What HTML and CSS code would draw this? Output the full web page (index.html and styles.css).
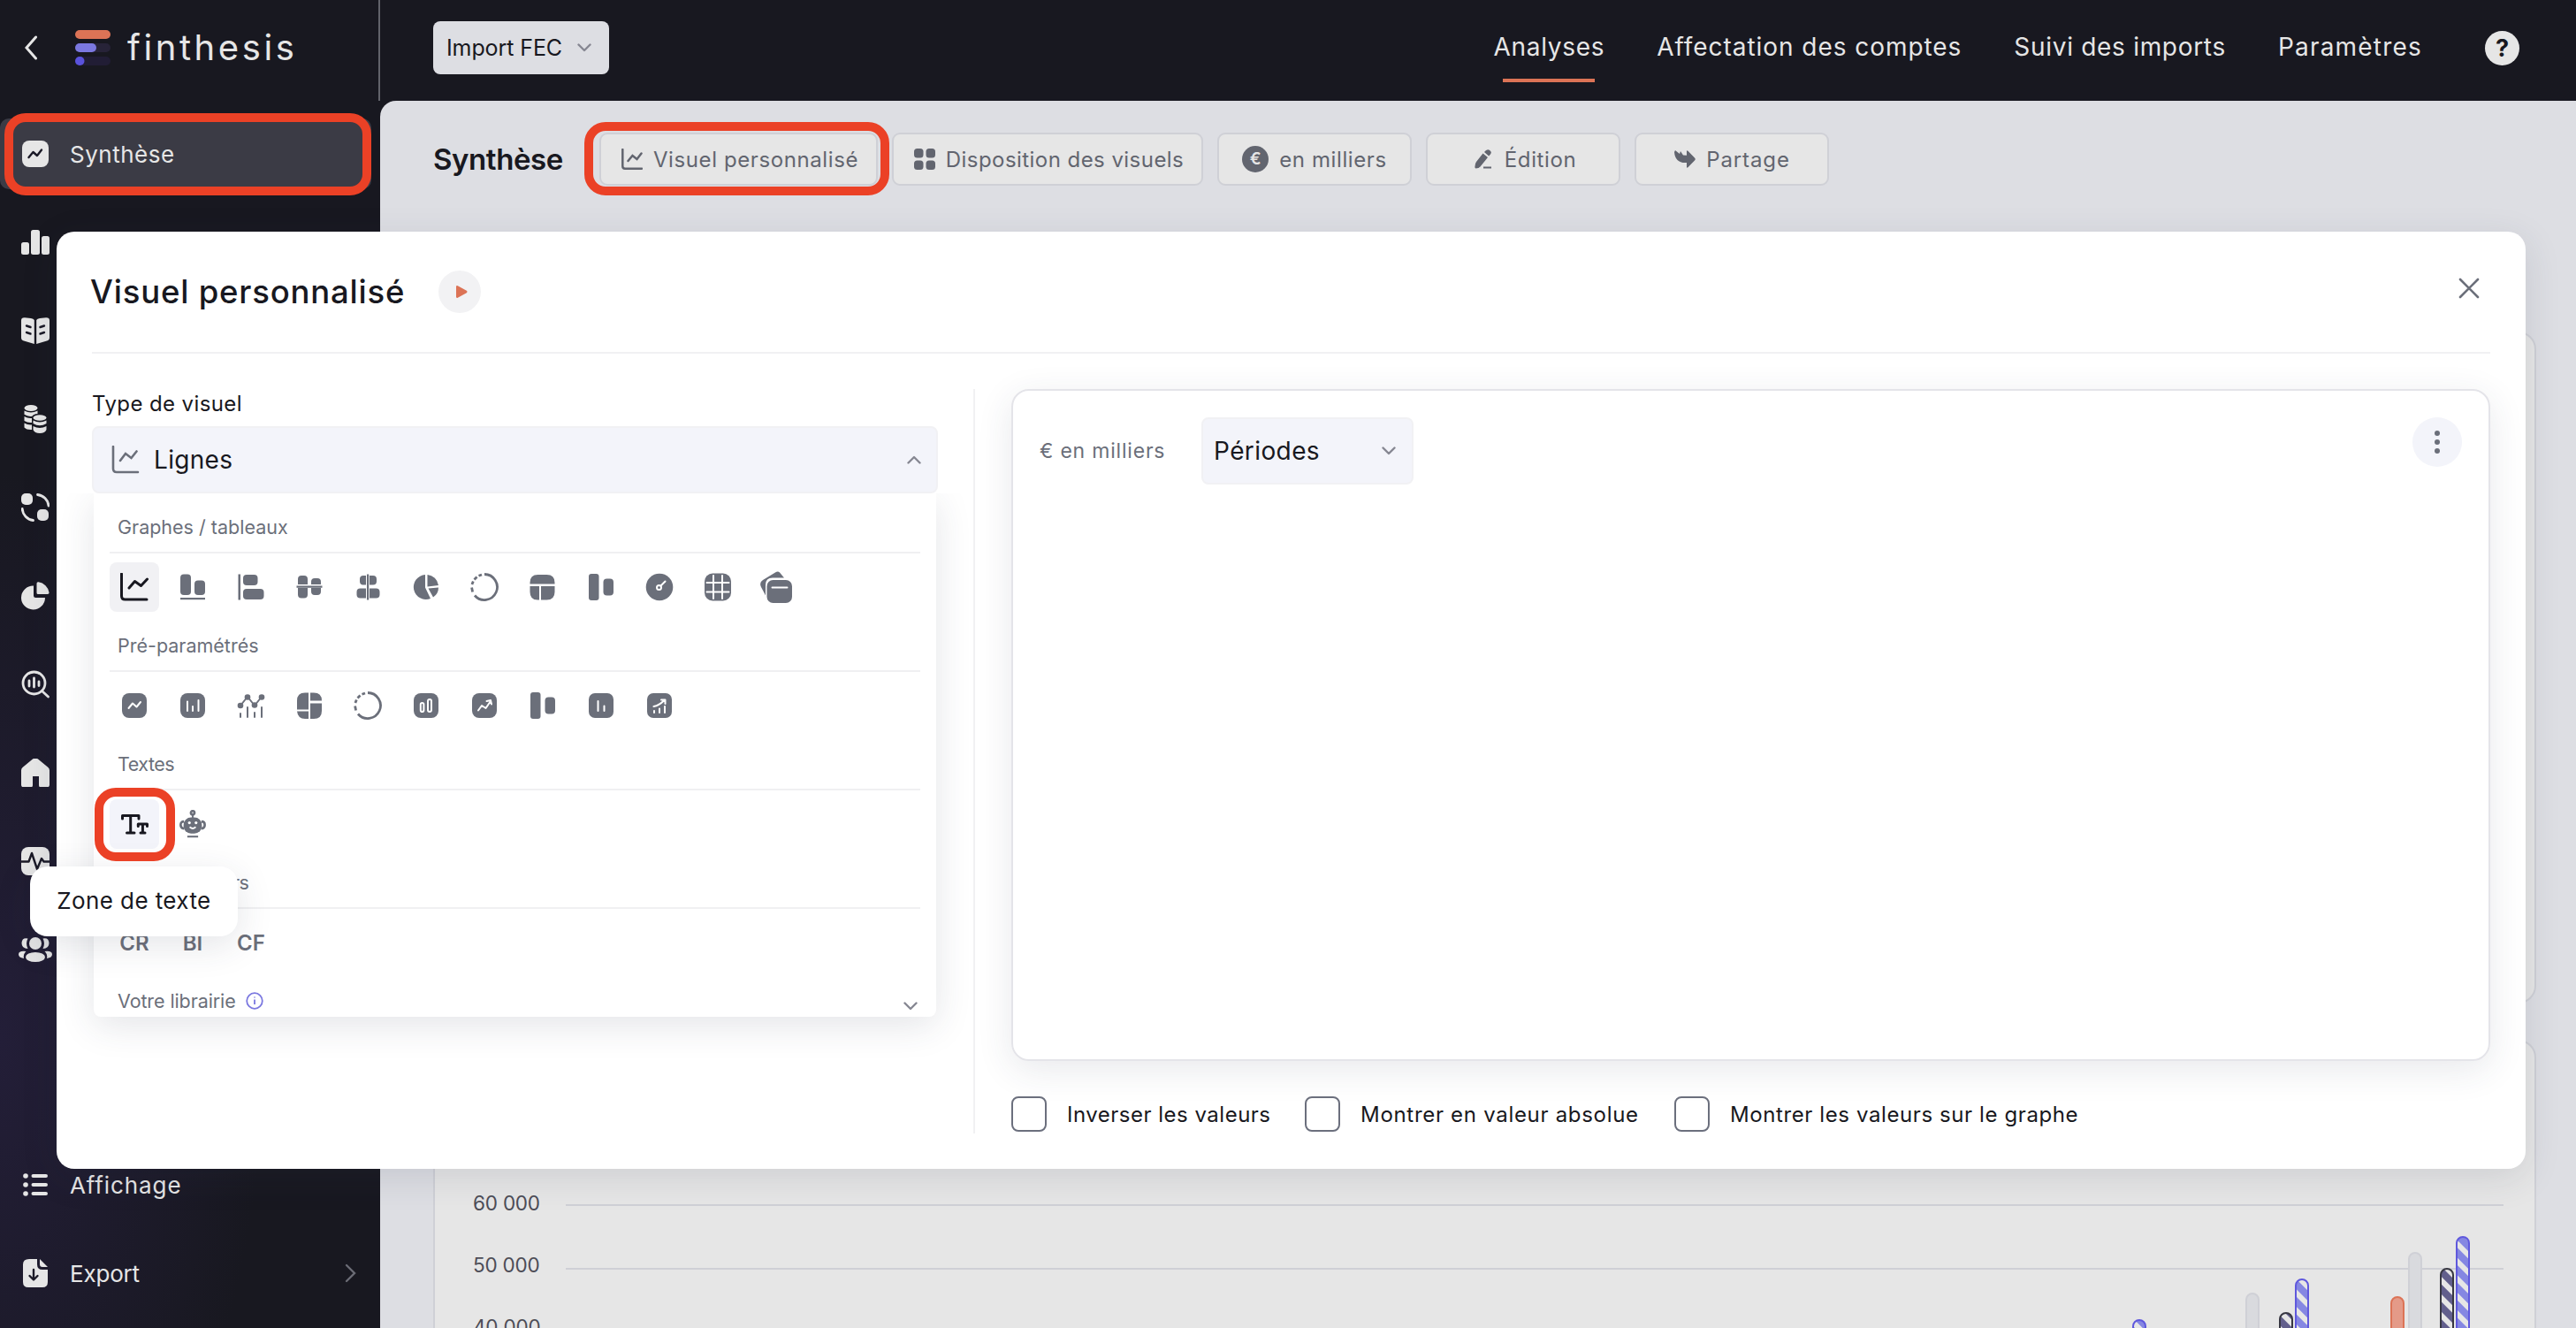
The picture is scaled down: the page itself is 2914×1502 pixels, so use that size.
FILE: index.html
```html
<!DOCTYPE html>
<html lang="fr">
<head>
    <meta charset="utf-8">
    <title>finthesis</title>
    <link rel="stylesheet" href="styles.css">
</head>
<body>
    <header class="topbar">
        <div class="brand">
            <svg class="back" viewBox="0 0 16 28"><path d="M13.500 2L3 14l10.500 12"/></svg>
            <svg class="logo" viewBox="0 0 40 40">
                <rect width="40" height="10" rx="5" fill="#dc7356"/>
                <rect y="15" width="40" height="10" rx="5" fill="#272338"/>
                <rect y="15" width="24" height="10" rx="5" fill="#7b78e0"/>
                <rect y="30" width="40" height="10" rx="5" fill="#211d35"/>
                <rect y="30" width="10.500" height="10" rx="5" fill="#5a52dc"/>
            </svg>
            <span class="brand-name">finthesis</span>
        </div>
        <div class="import-select">
            <span>Import FEC</span>
            <svg class="chev" viewBox="0 0 16 10"><path d="M1.500 1.500L8 8l6.500-6.500"/></svg>
        </div>
        <nav class="nav">
            <a class="nav-link active">Analyses</a>
            <a class="nav-link nav-affect">Affectation des comptes</a>
            <a class="nav-link">Suivi des imports</a>
            <a class="nav-link nav-param">Paramètres</a>
        </nav>
        <div class="help">?</div>
    </header>

    <div class="page">
        <aside class="sidebar">
            <div class="side-item selected">
                <svg class="side-icon" viewBox="0 0 32 32"><rect x="1" y="1" width="30" height="30" rx="8"/><path class="cut" d="M8.500 20l5-6 4.500 4 5-6.500"/></svg>
                <span>Synthèse</span>
            </div>
            <div class="side-item">
                <svg class="side-icon" viewBox="0 0 32 32"><rect x="0" y="16" width="9" height="14" rx="2.500"/><rect x="11" y="2" width="10" height="28" rx="2.500"/><rect x="23" y="9" width="9" height="21" rx="2.500"/></svg>
            </div>
            <div class="side-item">
                <svg class="side-icon" viewBox="0 0 32 32"><path d="M14.800 4v27L3 27.500Q0 26.500 0 24V4.500Q0 1 4 1.200l7 .8q3 .5 3.800 2zM17.200 4v27L29 27.500q3-1 3-3.500V4.500Q32 1 28 1.200l-7 .8q-3 .5-3.800 2z"/><path class="cut" d="M6 10.500l4.500 1.500M6 18l4.500 1.500M26 10.500L21.500 12M26 18l-4.500 1.500"/></svg>
            </div>
            <div class="side-item">
                <svg class="side-icon" viewBox="0 0 32 32"><ellipse cx="11" cy="3.500" rx="7.500" ry="3.500"/><path d="M3.500 6.500q7.500 4 15 0v3.500q-5 .5-6 2.800-5 .7-9-2zM3.500 13q4 2.500 8.500 2v5q-4.500.500-8.500-2zM3.500 20.500q4 2.500 8.500 2v5.500q-6 .3-8.500-2.500z"/><ellipse cx="21" cy="14.500" rx="7.500" ry="3.300"/><path d="M13.500 17.500q7.500 4 15 0v3.500q-7.500 4.500-15 0zM13.500 24q7.500 4 15 0v4q-1.500 4-7.500 4t-7.500-4z"/></svg>
            </div>
            <div class="side-item">
                <svg class="side-icon" viewBox="0 0 32 32"><rect x="0" y="0" width="13" height="13" rx="5"/><rect x="18" y="18" width="13" height="13" rx="5"/><path class="ring" d="M18.500 1.500A14 14 0 0 1 31 14M1.200 17.500A14 14 0 0 0 13.500 30.500"/></svg>
            </div>
            <div class="side-item">
                <svg class="side-icon" viewBox="0 0 32 32"><path d="M14 4.500v11q0 2.500 2.500 2.500H27A13.500 13.500 0 1 1 14 4.500zM17.500 2q0-2 2-1.700A14 14 0 0 1 31.500 12q.3 2-1.500 2H19q-1.500 0-1.500-1.500z"/></svg>
            </div>
            <div class="side-item">
                <svg class="side-icon" viewBox="0 0 32 32"><circle class="ring" cx="14.500" cy="14.500" r="12.500"/><path class="ring" d="M9 12v6M14.500 9v10M20 13v4.500M24 24l6.500 6"/></svg>
            </div>
            <div class="side-item">
                <svg class="side-icon" viewBox="0 0 32 32"><path d="M13 .5q3-2 6 0l11.500 9.500q1.500 1.300 1.500 3.500v16q0 3-3 3h-6.500q-2.500 0-2.500-2.500v-10h-7v10q0 2.500-2.500 2.500H3q-3 0-3-3v-16Q0 11.300 1.500 10z"/></svg>
            </div>
            <div class="side-item">
                <svg class="side-icon" viewBox="0 0 32 32"><rect width="32" height="32" rx="8"/><path class="cut" d="M0 16.500h8.500L12 7l6 18 5-12 2.500 3.500H32"/></svg>
            </div>
            <div class="side-item">
                <svg class="side-icon wide" viewBox="0 0 38 32"><circle cx="19" cy="9" r="7"/><path d="M10.500 3.500Q4 2 3.500 8.500q0 6.500 7 6.500-3-6 0-11.500zM27.500 3.500q6.500-1.500 7 5 0 6.500-7 6.500 3-6 0-11.500z"/><ellipse cx="19" cy="24.500" rx="11" ry="5.500"/><path d="M8.500 18Q0 17 0 21.500q0 3.500 6 4.500-1-5 2.500-8zM29.500 18q8.500-1 8.500 3.500 0 3.500-6 4.500 1-5-2.500-8z"/></svg>
            </div>
            <div class="side-item side-bottom">
                <svg class="side-icon" viewBox="0 0 32 32"><circle cx="5" cy="6" r="2.800"/><circle cx="5" cy="16" r="2.800"/><circle cx="5" cy="26" r="2.800"/><path class="ring thick" d="M13.500 6H28M13.500 16H28M13.500 26H28"/></svg>
                <span>Affichage</span>
            </div>
            <div class="side-item side-export">
                <svg class="side-icon" viewBox="0 0 32 32"><path d="M9 0h9v6q0 6 6 6h6v14q0 6-6 6H8q-6 0-6-6V6q0-6 7-6zM21 0l9 9h-6q-3 0-3-3z"/><path class="cut" d="M14 12v11M9.500 19l4.500 4.500 4.500-4.500"/></svg>
                <span>Export</span>
                <svg class="side-arrow" viewBox="0 0 14 22"><path d="M2 2l9 9-9 9"/></svg>
            </div>
        </aside>

        <main class="content">
            <div class="toolbar">
                <h1 class="page-title">Synthèse</h1>
                <div class="buttons">
                    <button class="tool tool-visuel">
                        <svg class="tool-icon" viewBox="0 0 24 24"><path class="line" d="M1.300 1v19q0 2.700 2.700 2.700h19M7.500 14l5-6 5 4 5-6.500"/></svg>
                        <span>Visuel personnalisé</span>
                    </button>
                    <button class="tool tool-dispo">
                        <svg class="tool-icon" viewBox="0 0 24 24"><rect width="10.500" height="10.500" rx="3.500"/><rect x="13.500" width="10.500" height="10.500" rx="3.500"/><rect y="13.500" width="10.500" height="10.500" rx="3.500"/><rect x="13.500" y="13.500" width="10.500" height="10.500" rx="3.500"/></svg>
                        <span>Disposition des visuels</span>
                    </button>
                    <button class="tool">
                        <span class="euro">€</span>
                        <span>en milliers</span>
                    </button>
                    <button class="tool tool-edit">
                        <svg class="tool-icon" viewBox="0 0 24 24"><path d="M11.500 5.500l5.500 4.500-8.500 10.500q-1.500 2-5 2Q2 22.500 2.500 20q.3-3.500 1.500-5zM13 4q3.200-4.500 6.500-1.800t-1.300 6.200zM12 20.500h9v2h-9z"/></svg>
                        <span>Édition</span>
                    </button>
                    <button class="tool tool-share">
                        <svg class="tool-icon" viewBox="0 0 24 24"><path d="M1 2l5 4 1-3 3 4.500 4 .2V3.500q0-2 1.700-.6l7.300 7.600q1.500 1.500 0 3L15.700 21q-1.700 1.500-1.700-.6V16Q1 17 0 4z"/></svg>
                        <span>Partage</span>
                    </button>
                </div>
            </div>
            <section class="card first-card"></section>
            <section class="card chart-card">
                <div class="axis">
                    <span>60 000</span>
                    <span>50 000</span>
                    <span>40 000</span>
                </div>
                <svg class="plot" viewBox="0 0 2192 180">
                    <defs>
                        <pattern id="stripes" width="14" height="14" patternUnits="userSpaceOnUse" patternTransform="rotate(-45)">
                            <rect width="14" height="14" fill="#e6e6e6"/>
                            <rect width="8" height="14" fill="#8587e2"/>
                        </pattern>
                        <pattern id="stripes-dark" width="14" height="14" patternUnits="userSpaceOnUse" patternTransform="rotate(-45)">
                            <rect width="14" height="14" fill="#e6e6e6"/>
                            <rect width="8" height="14" fill="#625f8c"/>
                        </pattern>
                    </defs>
                    <path class="grid" d="M0 41h2192M0 113h2192"/>
                    <g class="bars">
                        <rect class="b-blue" x="1773" y="171" width="14" height="60" rx="7"/>
                        <rect class="b-gray" x="1901" y="141" width="14" height="60" rx="7"/>
                        <rect class="b-dark" x="1939" y="163" width="14" height="60" rx="7"/>
                        <rect class="b-blue" x="1957" y="125" width="14" height="80" rx="7"/>
                        <rect class="b-coral" x="2065" y="145" width="14" height="60" rx="7"/>
                        <rect class="b-gray" x="2085" y="95" width="14" height="100" rx="7"/>
                        <rect class="b-dark" x="2121" y="113" width="14" height="90" rx="7"/>
                        <rect class="b-blue" x="2139" y="77" width="14" height="120" rx="7"/>
                    </g>
                </svg>
            </section>
        </main>
    </div>

    <!-- Fenêtre "Visuel personnalisé" -->
    <div class="modal">
        <div class="modal-head">
            <h2>Visuel personnalisé</h2>
            <div class="play"><svg viewBox="0 0 14 16"><path d="M1 2.500Q1 .5 2.800 1.300l10 5.500q1.400 1.200 0 2.400l-10 5.500Q1 15.500 1 13.500z"/></svg></div>
            <svg class="close" viewBox="0 0 24 24"><path d="M2 2l20 20M22 2L2 22"/></svg>
        </div>
        <div class="modal-body">
            <div class="left">
                <label class="field-label">Type de visuel</label>
                <div class="type-select">
                    <svg class="type-icon" viewBox="0 0 32 32"><path d="M2 1v25q0 4 4 4h24M10 17l6-8 6.500 5L28.500 6.500"/></svg>
                    <span>Lignes</span>
                    <svg class="chev up" viewBox="0 0 16 10"><path d="M1.500 8.500L8 2l6.500 6.500"/></svg>
                </div>
                <div class="dropdown">
                    <div class="group">
                        <div class="group-label">Graphes / tableaux</div>
                        <div class="icons">
                            <div class="tile current"><svg viewBox="0 0 32 32"><path class="ln" d="M1.500 1v25q0 4 4 4H30M10 17l6.500-7.500 7 5L30.500 7"/></svg></div>
                            <div class="tile"><svg viewBox="0 0 32 32"><rect x="2" y="1.500" width="12" height="23.500" rx="4"/><rect x="18" y="8.500" width="12" height="16.500" rx="4"/><rect x="2" y="28" width="28" height="2.200"/></svg></div>
                            <div class="tile"><svg viewBox="0 0 32 32"><rect x="1.500" y="1.500" width="2.500" height="29"/><rect x="7" y="2" width="16.500" height="12" rx="4"/><rect x="7" y="18" width="23.500" height="12" rx="4"/></svg></div>
                            <div class="tile"><svg viewBox="0 0 32 32"><path d="M3 13V7q0-4 4-4h3q4 0 4 4v6zM18 13v-3q0-4 4-4h3q4 0 4 4v3zM3 17h11v7.500q0 4-4 4H7q-4 0-4-4zM18 17h11v4q0 4-4 4h-3q-4 0-4-4zM1.500 14.500h29v2.200h-29z"/></svg></div>
                            <div class="tile"><svg viewBox="0 0 32 32"><path d="M14 13.500h-4q-3-.5-3-4V7q0-4 4-4h3zM18 13.500h4q4 0 4-4V7q0-4-4-4h-4zM14 28.500H7.500q-4 0-4-4v-3q0-4 4-4H14zM18 28.500h7.500q4 0 4-4v-3q0-4-4-4H18zM15 1.500h2.200v29H15z"/></svg></div>
                            <div class="tile"><svg viewBox="0 0 32 32"><path d="M15 2v14.500L21 29A14 14 0 1 1 15 2zM17.500 2A14 14 0 0 1 30 14l-12.500 1.500zM18.500 17.500l11.500-1q0 7-6 11z"/></svg></div>
                            <div class="tile"><svg viewBox="0 0 32 32"><path class="arc" d="M16 1.500A14.500 14.500 0 1 1 5 25.500M13 2l-3.500 1.300M7.500 4.500L4.500 7.500M3.300 9.500L1.900 13M1.600 16.500L2.600 21.500"/></svg></div>
                            <div class="tile"><svg viewBox="0 0 32 32"><path d="M1.500 12.500V11q0-9 9-9h10q9 0 9 9v1.500zM1.500 15H12v15.500h-2q-8.500 0-8.500-9zM14 15h15.500v6.500q0 9-9 9H14z"/></svg></div>
                            <div class="tile"><svg viewBox="0 0 32 32"><rect x="2" y="1" width="11.500" height="30" rx="3"/><rect x="18.500" y="6.500" width="11.500" height="19" rx="4"/></svg></div>
                            <div class="tile"><svg viewBox="0 0 32 32"><circle cx="16" cy="16" r="15.300"/><circle class="w" cx="15.500" cy="16.500" r="2.500"/><path class="w" d="M17.500 14.500l5-5"/></svg></div>
                            <div class="tile"><svg viewBox="0 0 32 32"><rect x="1" y="0.500" width="30" height="31" rx="9"/><path class="w" d="M11 3v26M21 3v26M3.500 11h25M3.500 21.500h25"/></svg></div>
                            <div class="tile"><svg class="big" viewBox="0 0 36 36"><path d="M1 18Q-1.500 12.500 3 10L17 1.500q3-2 5 0l5 6H14q-8 0-8 8v12z"/><rect x="7.500" y="10" width="28.500" height="26" rx="7"/><path class="w" d="M13.500 18.500h17"/></svg></div>
                        </div>
                    </div>
                    <div class="group">
                        <div class="group-label">Pré-paramétrés</div>
                        <div class="icons">
                            <div class="tile"><svg viewBox="0 0 32 32"><rect x="2" y="2" width="28" height="28" rx="8"/><path class="w" d="M9.500 19l4.500-5.500 4.500 4L23 12"/></svg></div>
                            <div class="tile"><svg viewBox="0 0 32 32"><rect x="2" y="2" width="28" height="28" rx="8"/><path class="w" d="M10 11.500V22M16 17v5M22.500 10v12"/></svg></div>
                            <div class="tile"><svg viewBox="0 0 32 32"><path class="ln2" d="M4 16l8-10 8 10 8-10"/><circle cx="4" cy="16" r="3.300"/><circle cx="12" cy="6.500" r="3.300"/><circle cx="20" cy="15.500" r="3.300"/><circle cx="28" cy="6.500" r="3.300"/><path class="ln2" d="M4 25v4M12 18v11M20 24v5M28 18v11"/></svg></div>
                            <div class="tile"><svg viewBox="0 0 32 32"><path d="M15 1.500v19H2V10.500q0-9 9-9zM17 1.500h4q9 0 9 9H17zM17 13.500h13V22q0 9-9 9h-4zM2 22.500h13V31h-4q-8 0-9-8.500z"/></svg></div>
                            <div class="tile"><svg viewBox="0 0 32 32"><path class="arc" d="M16 1.500A14.500 14.500 0 1 1 5 25.500M13 2l-3.500 1.300M7.500 4.500L4.500 7.500M3.300 9.500L1.900 13M1.600 16.500L2.600 21.500"/></svg></div>
                            <div class="tile"><svg viewBox="0 0 32 32"><rect x="2" y="2" width="28" height="28" rx="8"/><rect class="w" x="9.800" y="13" width="3.600" height="10" rx="1.800"/><rect class="w" x="18" y="9" width="4" height="14" rx="2"/></svg></div>
                            <div class="tile"><svg viewBox="0 0 32 32"><rect x="2" y="2" width="28" height="28" rx="8"/><path class="w" d="M9 21.500l4-5.500 4.500 3L23 11M18.500 11l4.500-1 1 4.500"/></svg></div>
                            <div class="tile"><svg viewBox="0 0 32 32"><rect x="2" y="1" width="11.500" height="30" rx="3"/><rect x="18.500" y="6.500" width="11.500" height="19" rx="4"/></svg></div>
                            <div class="tile"><svg viewBox="0 0 32 32"><rect x="2" y="2" width="28" height="28" rx="7"/><path class="w" d="M12.500 11v11M19.500 16.500V22"/></svg></div>
                            <div class="tile"><svg viewBox="0 0 32 32"><rect x="2" y="2" width="28" height="28" rx="7"/><path class="w" d="M10 22v2M16 19.500V24M22 17v7M9.500 17q6-1 12-7M18 9.500h4.500V14"/></svg></div>
                        </div>
                    </div>
                    <div class="group">
                        <div class="group-label tight">Textes</div>
                        <div class="icons">
                            <div class="tile hover"><svg viewBox="0 0 32 32"><path class="tt" d="M2.500 10V6.500H21V10M11.700 6.500V26M7.500 26h8.500M20.300 18.500V16h10.200v2.500M25.400 16v10M23 26h5"/></svg></div>
                            <div class="tile"><svg viewBox="0 0 32 34"><circle class="arc" cx="16" cy="3.500" r="2.200"/><path d="M15 6h2v4h-2z"/><rect x="5" y="9" width="22" height="19.500" rx="9"/><path class="arc" d="M5.500 14Q1.500 14 1.500 18t4 4.500M26.500 14q4 0 4 4t-4 4.500"/><circle class="dot" cx="12" cy="15.500" r="1.700"/><circle class="dot" cx="20" cy="15.500" r="1.700"/><path class="w" d="M13 21q3 2.500 6 0"/><rect x="9.500" y="31" width="13" height="2.200"/></svg></div>
                        </div>
                    </div>
                    <div class="group">
                        <div class="group-label tight">États financiers</div>
                        <div class="icons">
                            <div class="tile code">CR</div>
                            <div class="tile code">BI</div>
                            <div class="tile code">CF</div>
                        </div>
                    </div>
                    <div class="library">
                        <span>Votre librairie</span>
                        <svg class="info" viewBox="0 0 20 20"><circle cx="10" cy="10" r="8.800"/><path d="M10 8.500V14M10 5.500v1"/></svg>
                        <svg class="chev" viewBox="0 0 16 10"><path d="M1.500 1.500L8 8l6.500-6.500"/></svg>
                    </div>
                </div>
            </div>
            <div class="right">
                <div class="preview">
                    <span class="unit">€ en milliers</span>
                    <div class="period-select">
                        <span>Périodes</span>
                        <svg class="chev" viewBox="0 0 16 10"><path d="M1.500 1.500L8 8l6.500-6.500"/></svg>
                    </div>
                    <div class="kebab"><i></i><i></i><i></i></div>
                </div>
                <div class="checks">
                    <label class="check check-1"><span class="box"></span>Inverser les valeurs</label>
                    <label class="check check-2"><span class="box"></span>Montrer en valeur absolue</label>
                    <label class="check check-3"><span class="box"></span>Montrer les valeurs sur le graphe</label>
                </div>
            </div>
        </div>
    </div>

    <div class="tooltip">Zone de texte</div>

    <div class="mark mark-side"></div>
    <div class="mark mark-button"></div>
    <div class="mark mark-text"></div>
</body>
</html>
```

FILE: styles.css
```css
* {
    box-sizing: border-box;
}

body {
    margin: 0;
    width: 2914px;
    height: 1502px;
    overflow: hidden;
    position: relative;
    background: #181820;
    font-family: Inter, "Open Sans", sans-serif;
    color: #181820;
}

svg {
    display: block;
    flex: none;
}

h1, h2 {
    margin: 0;
}

/* ---- top bar ---- */
.topbar {
    display: flex;
    height: 114px;
    background: #181820;
}

.brand {
    display: flex;
    align-items: center;
    width: 430px;
    padding: 0 0 6px 27px;
    border-right: 2px solid #62636b;
}

.back {
    width: 16px;
    height: 28px;
    fill: none;
    stroke: #e6e6e6;
    stroke-width: 3;
    stroke-linecap: round;
}

.logo {
    width: 40px;
    height: 40px;
    margin: 0 19px 0 42px;
}

.brand-name {
    color: #e6e6e6;
    font-size: 40px;
    line-height: 48px;
    letter-spacing: 3.6px;
}

.import-select {
    display: flex;
    align-items: center;
    justify-content: space-between;
    width: 199px;
    height: 60px;
    margin: 24px 0 0 60px;
    padding: 0 20px 0 15px;
    border-radius: 8px;
    background: #dddee3;
    font-size: 25px;
    letter-spacing: -0.1px;
}

.chev {
    width: 16px;
    height: 10px;
    fill: none;
    stroke: #868792;
    stroke-width: 2.4;
    stroke-linecap: round;
    stroke-linejoin: round;
}

.nav {
    display: flex;
    margin-left: auto;
    height: 94px;
    gap: 59px;
}

.nav-link {
    color: #e6e6e6;
    font-size: 28px;
    line-height: 106px;
    letter-spacing: 0.7px;
    white-space: nowrap;
}

.nav-affect {
    letter-spacing: 0.95px;
}

.nav-param {
    letter-spacing: 1.2px;
}

.nav-link.active {
    background: linear-gradient(#dc7356, #dc7356) no-repeat 50% 89px / 104px 4px;
}

.help {
    width: 39px;
    height: 39px;
    margin: 35px 64px 0 71px;
    border-radius: 50%;
    background: #e6e6e6;
    font-size: 27px;
    font-weight: 700;
    line-height: 39px;
    text-align: center;
}

/* ---- sidebar ---- */
.page {
    display: flex;
    height: 1388px;
}

.sidebar {
    width: 430px;
    padding-top: 20px;
    background: radial-gradient(ellipse 300px 640px at 0 1060px, #231e38, rgba(24, 24, 32, 0) 100%), #181820;
}

.side-item {
    display: flex;
    align-items: center;
    width: 420px;
    height: 80px;
    margin-bottom: 20px;
    padding-left: 24px;
    border-radius: 10px;
    color: #e6e6e6;
    font-size: 26px;
    letter-spacing: 0.5px;
}

.side-item span {
    margin-left: 23px;
}

.side-item.selected {
    background: #3b3b45;
}

.side-bottom {
    margin-top: 186px;
    letter-spacing: 0.9px;
}

.side-export {
    letter-spacing: -0.2px;
}

.side-icon {
    width: 32px;
    height: 32px;
    fill: #e6e6e6;
}

.side-icon.wide {
    width: 38px;
    margin-left: -3px;
}

.side-icon .cut {
    fill: none;
    stroke: #1b1a27;
    stroke-width: 2.4;
    stroke-linecap: round;
    stroke-linejoin: round;
}

.side-icon .ring {
    fill: none;
    stroke: #e6e6e6;
    stroke-width: 2.8;
    stroke-linecap: round;
}

.side-icon .thick {
    stroke-width: 4;
}

.side-arrow {
    width: 14px;
    height: 22px;
    margin: 0 16px 0 auto;
    fill: none;
    stroke: #6b6c75;
    stroke-width: 2.4;
    stroke-linecap: round;
}

/* ---- page content ---- */
.content {
    flex: 1;
    padding: 0 45px 0 60px;
    border-top-left-radius: 18px;
    background: #dddee3;
    overflow: hidden;
}

.toolbar {
    display: flex;
    align-items: center;
    height: 60px;
    margin-top: 36px;
}

.page-title {
    width: 188px;
    font-size: 33px;
    font-weight: 600;
    letter-spacing: -0.4px;
}

.buttons {
    display: flex;
    gap: 16px;
}

.tool {
    display: flex;
    align-items: center;
    justify-content: center;
    gap: 12px;
    width: 220px;
    height: 60px;
    padding: 0;
    border: 2px solid #cfd0d6;
    border-radius: 9px;
    background: #e6e6e6;
    color: #62656f;
    font-family: inherit;
    font-size: 24px;
    letter-spacing: 0.6px;
    white-space: nowrap;
}

.tool-visuel {
    width: 315px;
    padding-left: 3px;
}

.tool-dispo {
    width: 352px;
    padding-left: 3px;
    letter-spacing: 0.45px;
}

.tool-edit {
    padding-left: 3px;
}

.tool-share {
    padding-left: 1px;
    letter-spacing: 0.9px;
}

.tool-icon {
    width: 24px;
    height: 24px;
    fill: #62656f;
}

.tool-icon .line {
    fill: none;
    stroke: #62656f;
    stroke-width: 2.5;
    stroke-linecap: round;
}

.euro {
    width: 30px;
    height: 30px;
    border-radius: 50%;
    background: #62656f;
    color: #e6e6e6;
    font-size: 19px;
    font-weight: 600;
    line-height: 30px;
    letter-spacing: 0;
    text-align: center;
}

.card {
    border: 2px solid #cfd0d6;
    border-radius: 20px;
    background: #e6e6e6;
}

.first-card {
    height: 760px;
    margin-top: 165px;
}

.chart-card {
    display: flex;
    height: 500px;
    margin-top: 41px;
    padding: 144px 0 0 43px;
}

.axis {
    display: flex;
    flex-direction: column;
    gap: 40px;
    width: 105px;
    padding-top: 24px;
    color: #4d4d57;
    font-size: 22.5px;
    line-height: 30px;
    letter-spacing: -0.2px;
}

.plot {
    width: 2192px;
    height: 180px;
}

.plot .grid {
    stroke: #cfd0d6;
    stroke-width: 2;
}

.bars rect {
    stroke-width: 2;
}

.b-blue {
    fill: url(#stripes);
    stroke: #5f58dd;
}

.b-dark {
    fill: url(#stripes-dark);
    stroke: #373742;
}

.b-gray {
    fill: #d9dade;
    stroke: #cfd0d6;
}

.b-coral {
    fill: #e49a88;
    stroke: #dc7356;
}

/* ---- modal ---- */
.modal {
    position: absolute;
    left: 64px;
    top: 262px;
    width: 2793px;
    height: 1060px;
    padding: 0 40px;
    border-radius: 20px;
    background: #fff;
    box-shadow: 0 10px 40px rgba(50, 52, 80, 0.13);
}

.modal-head {
    display: flex;
    align-items: center;
    height: 138px;
    border-bottom: 2px solid #f1f1f3;
}

.modal-head h2 {
    width: 394px;
    margin-left: -2px;
    font-size: 36.5px;
    font-weight: 500;
    letter-spacing: 0.8px;
}

.play {
    display: flex;
    align-items: center;
    justify-content: center;
    width: 48px;
    height: 48px;
    border-radius: 50%;
    background: #f2f2f4;
}

.play svg {
    width: 14px;
    height: 16px;
    margin-left: 3px;
    fill: #dc7356;
}

.close {
    width: 24px;
    height: 24px;
    margin: -8px 12px 0 auto;
    fill: none;
    stroke: #6b6f7a;
    stroke-width: 2.6;
    stroke-linecap: round;
}

.modal-body {
    display: flex;
    padding-top: 40px;
}

.left {
    width: 999px;
    height: 842px;
    padding-right: 40px;
    border-right: 2px solid #f1f1f3;
}

.field-label {
    display: block;
    height: 42px;
    font-size: 24px;
    line-height: 34px;
    letter-spacing: 0.4px;
}

.type-select {
    display: flex;
    align-items: center;
    height: 76px;
    padding: 0 17px 0 20px;
    border: 2px solid #f1f1f4;
    border-radius: 8px;
    background: #f3f4fa;
    font-size: 28px;
    letter-spacing: 0.3px;
}

.type-select span {
    margin-left: 16px;
}

.type-icon {
    width: 32px;
    height: 32px;
    fill: none;
    stroke: #6b6f7a;
    stroke-width: 2.6;
    stroke-linecap: round;
}

.chev.up {
    margin-left: auto;
}

.dropdown {
    height: 592px;
    margin: 0 2px;
    padding: 0 18px;
    border-radius: 0 0 8px 8px;
    background: #fff;
    box-shadow: 0 10px 40px rgba(50, 52, 80, 0.13);
    clip-path: inset(0 -60px -70px -60px);
}

.group {
    height: 134px;
    padding-top: 24px;
}

.group-label {
    height: 44px;
    padding-left: 9px;
    border-bottom: 2px solid #f0f0f2;
    color: #6b6f7a;
    font-size: 21.5px;
    line-height: 29px;
}

.group-label.tight {
    letter-spacing: -0.5px;
}

.icons {
    display: flex;
    gap: 10px;
    margin-top: 10px;
}

.tile {
    display: flex;
    align-items: center;
    justify-content: center;
    width: 56px;
    height: 56px;
    border-radius: 8px;
    color: #6b6f7a;
}

.tile svg {
    width: 32px;
    height: 32px;
    fill: currentColor;
}

.tile .big {
    width: 36px;
    height: 36px;
}

.tile .w,
.tile .ln,
.tile .ln2,
.tile .arc,
.tile .tt {
    fill: none;
    stroke: currentColor;
    stroke-width: 2.8;
    stroke-linecap: round;
    stroke-linejoin: round;
}

.tile .w {
    stroke: #fff;
    stroke-width: 2;
}

.tile .ln {
    stroke-width: 3;
}

.tile .ln2 {
    stroke-width: 2;
}

.tile .arc {
    stroke-linecap: butt;
}

.tile .tt {
    stroke-width: 3;
}

.tile .dot {
    fill: #fff;
}

.tile.current {
    background: #f1f1f4;
    color: #181820;
}

.tile.hover {
    background: #f3f4fa;
    color: #181820;
}

.tile.code {
    font-size: 24px;
    font-weight: 600;
}

.library {
    display: flex;
    align-items: center;
    height: 56px;
    padding: 20px 3px 0 9px;
    color: #6b6f7a;
    font-size: 21.5px;
    line-height: 29px;
    letter-spacing: -0.1px;
}

.library .chev {
    margin: 12px 0 0 auto;
}

.info {
    width: 20px;
    height: 20px;
    margin-left: 11px;
    fill: none;
    stroke: #7b78e0;
    stroke-width: 1.8;
}

.right {
    flex: 1;
    padding-left: 41px;
}

.preview {
    display: flex;
    align-items: flex-start;
    height: 760px;
    padding: 30px 30px 0;
    border: 2px solid #e4e4e9;
    border-radius: 20px;
    box-shadow: 0 10px 40px rgba(50, 52, 80, 0.11);
}

.unit {
    width: 183px;
    color: #6b6f7a;
    font-size: 23px;
    line-height: 76px;
    letter-spacing: 0.8px;
}

.period-select {
    display: flex;
    align-items: center;
    justify-content: space-between;
    width: 240px;
    height: 76px;
    padding: 0 18px 0 12px;
    border: 2px solid #f1f1f4;
    border-radius: 8px;
    background: #f3f4fa;
    font-size: 28px;
    letter-spacing: 0.4px;
}

.kebab {
    display: flex;
    flex-direction: column;
    align-items: center;
    justify-content: center;
    gap: 4px;
    width: 56px;
    height: 56px;
    margin-left: auto;
    border-radius: 50%;
    background: #f3f4fa;
}

.kebab i {
    width: 6px;
    height: 6px;
    border-radius: 50%;
    background: #6b6f7a;
}

.checks {
    display: flex;
    margin-top: 40px;
}

.check {
    display: flex;
    align-items: center;
    height: 40px;
    font-size: 24px;
    letter-spacing: 0.5px;
    white-space: nowrap;
}

.check-1 {
    width: 332px;
}

.check-2 {
    width: 418px;
    letter-spacing: 0.7px;
}

.check-3 {
    letter-spacing: 0.6px;
}

.box {
    width: 40px;
    height: 40px;
    margin-right: 23px;
    border: 2px solid #6b6f7d;
    border-radius: 8px;
}

/* ---- overlays ---- */
.tooltip {
    position: absolute;
    left: 34px;
    top: 980px;
    width: 235px;
    height: 79px;
    border-radius: 20px;
    background: #fff;
    box-shadow: 0 10px 40px rgba(50, 52, 80, 0.13);
    font-size: 26px;
    line-height: 78px;
    letter-spacing: 0.4px;
    text-align: center;
}

.mark {
    position: absolute;
    border: 10px solid #eb4126;
    border-radius: 24px;
}

.mark-side {
    left: 5px;
    top: 128px;
    width: 415px;
    height: 93px;
}

.mark-button {
    left: 661px;
    top: 138px;
    width: 345px;
    height: 83px;
}

.mark-text {
    left: 107px;
    top: 891px;
    width: 91px;
    height: 83px;
}
```
